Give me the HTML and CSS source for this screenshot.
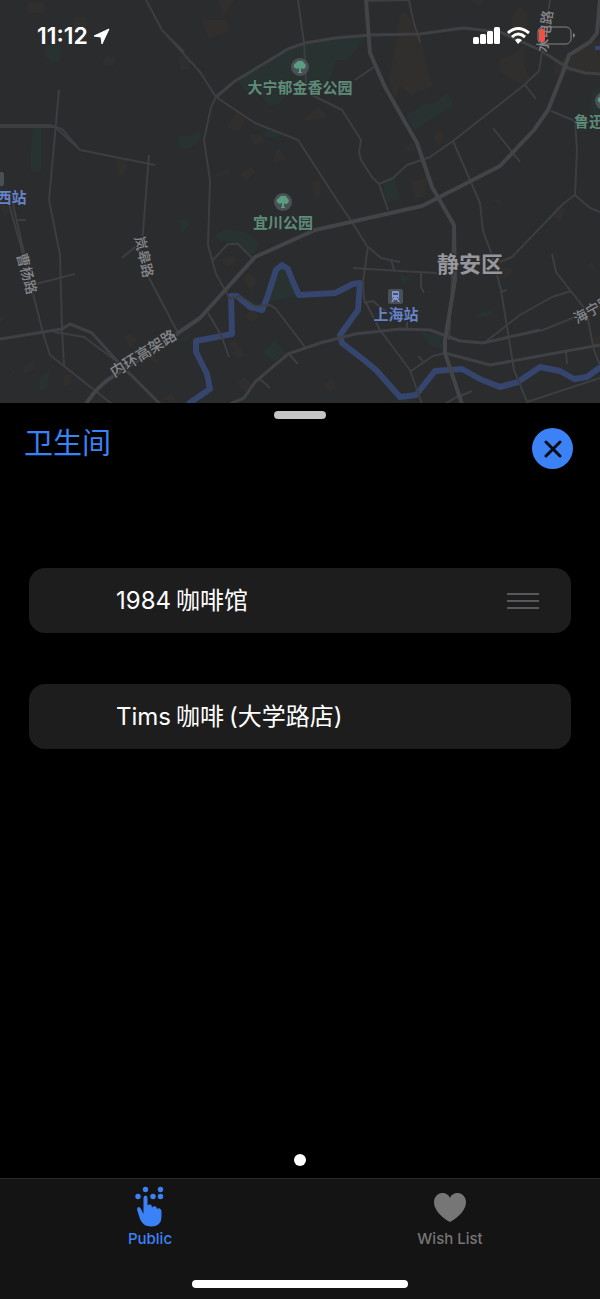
FILE: index.html
```html
<!DOCTYPE html>
<html lang="zh-CN">
<head>
<meta charset="utf-8">
<meta name="viewport" content="width=device-width, initial-scale=1">
<title>卫生间</title>
<link rel="stylesheet" href="styles.css">
</head>
<body>
<header class="map-area">
  <svg class="map" viewBox="0 0 600 403" role="img" aria-label="地图">
    <g class="parks">
      <path d="M237 81 262 65 290 49 332 37 366 36 355 51 347 60 336 60 332 75 324 85 290 90 279 104 269 106 261 96 247 91Z"/>
      <path d="M46 45H60V62H51L46 57ZM33 128H41V171H31V150ZM178 136H190L200 131V138L194 146 186 149 178 145Z"/>
      <path d="M266 128 282 134 276 138 265 136ZM405 116 425 103 433 104 447 93 454 105 430 119 415 130ZM383 182 395 178 400 200 386 202ZM592 92 600 88V118L590 112Z"/>
      <path d="M214 238 224 229 246 232 260 244 250 257 239 245ZM268 303 276 272 283 264 292 278 298 296 278 300ZM262 352 275 340 286 354 273 361Z"/>
      <path d="M178 219 191 222 183 232ZM173 342 193 332 187 341ZM39 380 50 369 47 389 40 390ZM9 376 17 366 14 374ZM420 332 442 336 444 350 431 346ZM474 320 482 312 494 309 490 315ZM400 274 410 279 403 284ZM396 395 406 393 409 402H398ZM0 317 5 318 0 324Z"/>
    </g>
    <g class="blocks">
      <path d="M28 2H44V13H28ZM74 17H86V27H74ZM106 56 116 57 113 67 102 64ZM178 56H189V69L181 70ZM219 0H235L223 16ZM201 20 226 20 230 31 221 34 209 39ZM117 160H127V168L119 178Z"/>
      <path d="M400 14 405 10 421 37 426 64 433 86 412 95 392 80 396 40ZM500 59 514 54 525 45 524 65 530 80 519 84 500 72ZM470 0H484L480 6ZM511 20 519 6 528 13 526 38 515 42ZM553 68 569 54 590 42 600 40V72H570L558 76ZM395 43 400 84 395 100 389 82Z"/>
      <path d="M302 121 319 106 328 118ZM236 111 248 116 239 131 227 128ZM250 133 262 136 263 143 253 144ZM278 147 286 160 273 162ZM211 178 230 167 229 174ZM240 174 251 167 256 171 246 181ZM312 182 320 180 320 195 315 200ZM433 136 440 130 444 136 439 147ZM403 147 413 142 416 150 405 152ZM411 182 428 177 424 197 415 198Z"/>
      <path d="M221 260 234 255 237 262 228 267ZM243 279 249 273 258 281 251 291ZM245 315 255 309 258 317 251 323ZM232 340 243 350 236 354 230 345ZM232 353 239 346 245 356 236 358ZM237 382 244 377 255 387 245 391ZM323 385 332 378 336 386 330 393ZM500 266 513 269 511 275 500 279ZM553 216 559 206 566 209 560 223ZM586 267 592 261 596 271ZM124 337 130 333 138 341 130 348ZM22 368 34 361 35 369 26 373ZM64 374 72 375 70 385 64 387ZM152 352 160 365 150 361ZM0 206 10 206 6 217ZM492 200H501L502 207ZM160 400 172 393 177 401ZM590 340 600 335V350Z"/>
    </g>
    <g class="river">
      <path d="M188 404 210 389 207 374 196 352 196 341 232 334 231 296 237 296 250 307 262 310 267 298 276 270 282 265 288 269 293 282 299 295 335 293 353 284 360 283 358 310 340 335 342 343 364 360 376 370 400 397 416 395 435 371 462 369 480 379 500 387 518 382 540 367 560 371 574 379 587 377 602 366"/>
    </g>
    <path class="canal" d="M595 48H600"/>
    <g class="roads">
      <path d="M146 0 162 30 200 72 216 97 255 123 298 140 337 200 352 222 367 246 381 258 400 262M162 30 184 52M0 125H50L62 129 80 150 155 165M0 127H55L80 150M59 90 49 200 60 255 62 329 64 366M149 155 142 245M122 258 140 243M148 276 178 333"/>
      <path d="M8 200 24 258 43 333 50 355 112 404M12 200 25 257M18 220H26M36 284 75 274M54 332 84 337 115 360M298 0 304 43 306 82 312 95 342 110 361 140 359 152 361 160 372 177 379 184 388 210M366 1 409 0 413 20 420 42M355 80 374 67"/>
      <path d="M379 184 393 178 407 165 430 157 453 141 523 86 539 71 542 52 550 0M525 85 536 99M493 128 520 162M453 141 470 180 480 203 483 231 492 255 501 290 514 370 528 404M551 111 575 121 577 150 575 195 564 203 512 257 500 262M575 195 590 208 600 212"/>
      <path d="M216 97 211 107 204 140 210 180 208 245 216 274 230 299 240 296 255 306 270 305 276 309 305 347M213 260 228 244 238 244 254 260M208 313 221 335 229 357M289 354 298 364M260 379 270 388M353 268 400 271 437 273M391 260 394 270M364 303 373 301 380 307 391 315M368 246 363 282 364 299 380 330 410 370 422 404"/>
      <path d="M421 273 421 287 424 293M407 322V330M484 343 520 315 552 297 571 291M507 290 500 292M552 254 556 272 570 290 586 310 594 350 600 365M411 371 433 356 445 353M418 356 423 361M566 352 567 364M445 404 455 398 472 391M527 402 600 378M510 337 543 330 600 307M453 225 452 280 449 340"/>
    </g>
    <g class="streets">
      <path d="M216 97 235 81 260 66 288 49 305 43 335 38 370 35 420 34 463 28 500 32 540 50 568 68 585 73 600 74"/>
      <path d="M0 339 62 329 70 324 92 333 118 362 160 404M230 404 244 398 255 382 288 354 320 343 355 334 400 329 430 330 460 341 483 343 540 330M445 353 490 365 600 345"/>
    </g>
    <g class="highways">
      <path d="M86 404Q98 385 115 375L178 333 200 318 255 257 315 230 422 206 500 166 534 130 548 110 562 75 569 55 590 42 597 33 600 0M366 0 370 53 385 87 417 143 432 187 454 225 455 280 445 340 445 353 462 404"/>
    </g>
    <g class="pins">
      <circle cx="300" cy="67" r="9"/><circle cx="283" cy="202" r="9"/><circle cx="604" cy="101" r="9"/>
      <rect x="388" y="289" width="15" height="15" rx="2"/><rect x="-8" y="172" width="12" height="14" rx="2"/>
    </g>
    <g class="trees">
      <path id="tree" d="M299 72V68Q296 70 294 67 293 64 296 63 298 60 300 61 303 60 304 63 307 65 305 68 303 70 301 68V72H302V73H298V72Z"/>
      <use href="#tree" x="-17" y="135"/><use href="#tree" x="304" y="34"/>
    </g>
    <path class="train" fill-rule="evenodd" d="M392 292Q392 291 393 291H398Q399 291 399 292V298L398 299 400 302H398L397 300H394L393 302H391L393 299 392 298ZM393 293V295H398V293ZM393 297V298H394V297ZM397 297V298H398V297Z"/>
    <g class="labels">
      <text class="park" x="300" y="93">大宁郁金香公园</text>
      <text class="park" x="283" y="228">宜川公园</text>
      <text class="park start" x="574" y="127">鲁迅公园</text>
      <text class="station" x="396" y="320">上海站</text>
      <text class="station" x="4" y="203">海西站</text>
      <text class="district" x="470" y="272">静安区</text>
      <text class="road" transform="translate(22 275) rotate(75)">曹杨路</text>
      <text class="road" transform="translate(139 258) rotate(77)">岚皋路</text>
      <text class="road large" transform="translate(146 358) rotate(-32)">内环高架路</text>
      <text class="road" transform="translate(550 32) rotate(-82)">水电路</text>
      <text class="road start" transform="translate(577 324) rotate(-29)">海宁路</text>
    </g>
  </svg>
  <div class="status">
    <div class="clock"><time>11:12</time>
      <svg width="17" height="17" viewBox="0 0 17 17" aria-hidden="true"><path d="M16 1 9 16 8 9 1 8Z" fill="#fff" stroke="#fff" stroke-linejoin="round"/></svg>
    </div>
    <svg class="signals" width="104" height="20" viewBox="0 0 104 20" aria-label="信号、无线网络、电量低" role="img">
      <g fill="#fff"><rect x="1" y="11" width="6" height="7" rx="1.500"/><rect x="8" y="8" width="6" height="10" rx="1.500"/><rect x="15" y="5" width="6" height="13" rx="1.500"/><rect x="22" y="1" width="6" height="17" rx="1.500"/></g>
      <g fill="none" stroke="#fff" stroke-width="3"><path d="M36 7Q46-2 57 7M40 11Q46 5 53 11"/></g><path d="M43 14Q46 11 50 14L46 18Z" fill="#fff"/>
      <rect x="66" y="1" width="33" height="17" rx="5" fill="none" stroke="#848487"/><path d="M101 7Q105 9 101 12Z" fill="#848487"/><rect x="67" y="3" width="6" height="13" rx="2" fill="#f15044"/>
    </svg>
  </div>
</header>
<main class="sheet">
  <div class="grabber"></div>
  <div class="sheet-head">
    <h1>卫生间</h1>
    <button class="close" type="button" aria-label="关闭"><svg width="18" height="18" viewBox="0 0 18 18" aria-hidden="true"><path d="M2 2 16 16M16 2 2 16" stroke="#080b12" stroke-width="3" stroke-linecap="round"/></svg></button>
  </div>
  <ul class="places">
    <li><span><span>1984</span><span>咖啡馆</span></span><button class="reorder" type="button" aria-label="重新排序"><i></i><i></i><i></i></button></li>
    <li><span><span>Tims</span><span>咖啡</span><span>(大学路店)</span></span></li>
  </ul>
  <div class="page-dot"></div>
</main>
<footer class="tabbar">
  <nav>
    <a class="active" href="#public" aria-current="page">
      <svg width="30" height="42" viewBox="0 0 30 42" fill="currentColor" aria-hidden="true"><circle cx="10.500" cy="3.500" r="2.700"/><circle cx="25.500" cy="3.500" r="2.700"/><circle cx="3" cy="10.500" r="2.700"/><circle cx="18" cy="10.500" r="2.700"/><circle cx="25.500" cy="10.500" r="2.700"/><path d="M8.500 12Q8.500 9.500 10.500 9.500T12.500 12V19.500Q13.500 18 15.500 18.500 17 19 17 21.500 18.500 19.500 20.500 20.500 22 21 22 23 24 21.500 25.500 23 26.500 24 26.500 26V31Q26.500 40.500 16 40.500 8 40.500 5 33L2.500 25Q1.500 21.500 3.500 21 5.500 21 6.500 24L8.500 28Z"/></svg>
      <span>Public</span>
    </a>
    <a href="#wish-list">
      <svg width="32" height="42" viewBox="0 0 32 42" fill="currentColor" aria-hidden="true"><path d="M16 36C12 34 0 26 0 16 0 11 4 7 8 7 12 7 15 9 16 12 17 9 20 7 24 7 28 7 32 11 32 16 32 26 20 34 16 36Z"/></svg>
      <span>Wish List</span>
    </a>
  </nav>
  <div class="home"></div>
</footer>
</body>
</html>
```
FILE: styles.css
```css
* { box-sizing: border-box; }
body { margin: 0; min-height: 100vh; display: flex; flex-direction: column; background: #000; color: #fff; font-family: Inter, "Noto Sans CJK SC", sans-serif; }
button { border: 0; padding: 0; background: none; cursor: pointer; }
.map-area { display: grid; background: #2b2c2e; }
.map-area > * { grid-area: 1 / 1; }
.map { display: block; width: 100%; height: auto; }
.parks { fill: #283231; }
.blocks { fill: #312f2d; }
.river, .canal, .roads, .streets, .highways { fill: none; stroke-linejoin: round; }
.river { stroke: #36456e; stroke-width: 6; }
.canal { stroke: #36456e; stroke-width: 4; }
.roads { stroke: #3d3e41; stroke-width: 2; }
.streets { stroke: #3f4043; stroke-width: 3; }
.highways { stroke: #434447; stroke-width: 4; }
.pins { fill: #4b5054; }
.trees { fill: #5b9c83; }
.train { fill: #7d98dc; }
.labels { font-family: "Noto Sans CJK SC", sans-serif; font-weight: 700; text-anchor: middle; stroke: #2b2c2e; stroke-width: 2; paint-order: stroke; }
.park { font-size: 15px; fill: #5d8c79; }
.station { font-size: 15px; fill: #6683c9; }
.district { font-size: 22px; fill: #96979d; }
.road { font-size: 14px; font-weight: 500; fill: #85868a; }
.large { font-size: 15px; }
.start { text-anchor: start; }
.status { display: flex; justify-content: space-between; align-items: center; align-self: start; padding: 22px 24px 0 37px; }
.clock { display: flex; align-items: center; gap: 5px; font-size: 23px; font-weight: 600; line-height: 28px; }
.sheet { flex: 1; display: flex; flex-direction: column; padding: 8px 24px 12px; }
.grabber { align-self: center; width: 52px; height: 8px; border-radius: 4px; background: #c5c5c5; }
.sheet-head { display: flex; justify-content: space-between; align-items: flex-start; padding: 4px 3px 0 0; }
h1 { margin: 0; padding-top: 1px; color: #3a82f7; font-size: 29px; font-weight: 400; line-height: 40px; }
.close { display: grid; place-items: center; width: 41px; height: 41px; margin-top: 5px; border-radius: 50%; background: #3b82f7; }
.places { list-style: none; display: grid; gap: 51px; margin: 99px 5px 0; padding: 0; }
.places li { display: flex; justify-content: space-between; align-items: center; min-height: 65px; padding: 0 32px 0 87px; border-radius: 16px; background: #1d1d1d; font-size: 24px; line-height: 36px; }
.places li > span { display: flex; gap: 5px; }
.reorder { display: grid; gap: 5px; width: 32px; }
.reorder i { height: 2px; background: #58585c; }
.page-dot { width: 12px; height: 12px; margin: auto auto 0; border-radius: 50%; background: #fff; }
.tabbar { display: grid; justify-items: center; align-content: space-between; min-height: 121px; padding: 7px 0 11px; border-top: 1px solid #272727; background: #141414; }
nav { display: grid; grid-template-columns: 1fr 1fr; width: 100%; }
nav a { display: grid; justify-items: center; color: #767676; font-size: 15px; font-weight: 500; line-height: 22px; text-decoration: none; }
nav a.active { color: #3b82f7; }
.home { width: 36%; height: 8px; border-radius: 4px; background: #fff; }
```
